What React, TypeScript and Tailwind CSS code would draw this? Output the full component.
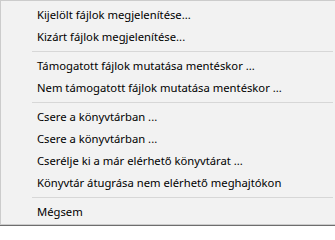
const csoportok: string[][] = [
  ["Kijelölt fájlok megjelenítése...", "Kizárt fájlok megjelenítése..."],
  ["Támogatott fájlok mutatása mentéskor ...", "Nem támogatott fájlok mutatása mentéskor ..."],
  [
    "Csere a könyvtárban ...",
    "Csere a könyvtárban ...",
    "Cserélje ki a már elérhető könyvtárat ...",
    "Könyvtár átugrása nem elérhető meghajtókon",
  ],
  ["Mégsem"],
];

function Elem({ szoveg }: { szoveg: string }) {
  return (
    <div className="flex h-[22px] items-center pl-[36px] text-[11.25px] leading-none text-black">
      {szoveg}
    </div>
  );
}

export default function App() {
  return (
    <div
      className="w-[335px] h-[226px] overflow-hidden bg-[#6e6e6e]"
      style={{ fontFamily: '"Noto Sans", "Open Sans", sans-serif' }}
    >
      <div className="flex h-[225px] flex-col border-l border-t border-b border-[#cccccc] bg-[#f2f2f2] pt-[3px]">
        {csoportok.map((csoport, i) => (
          <div key={i}>
            {i > 0 && (
              <div className="flex h-[7px] items-center pl-[31px] pr-[2px]">
                <div className="h-px w-full bg-[#d7d7d7]" />
              </div>
            )}
            {csoport.map((s, j) => (
              <Elem key={j} szoveg={s} />
            ))}
          </div>
        ))}
      </div>
    </div>
  );
}
